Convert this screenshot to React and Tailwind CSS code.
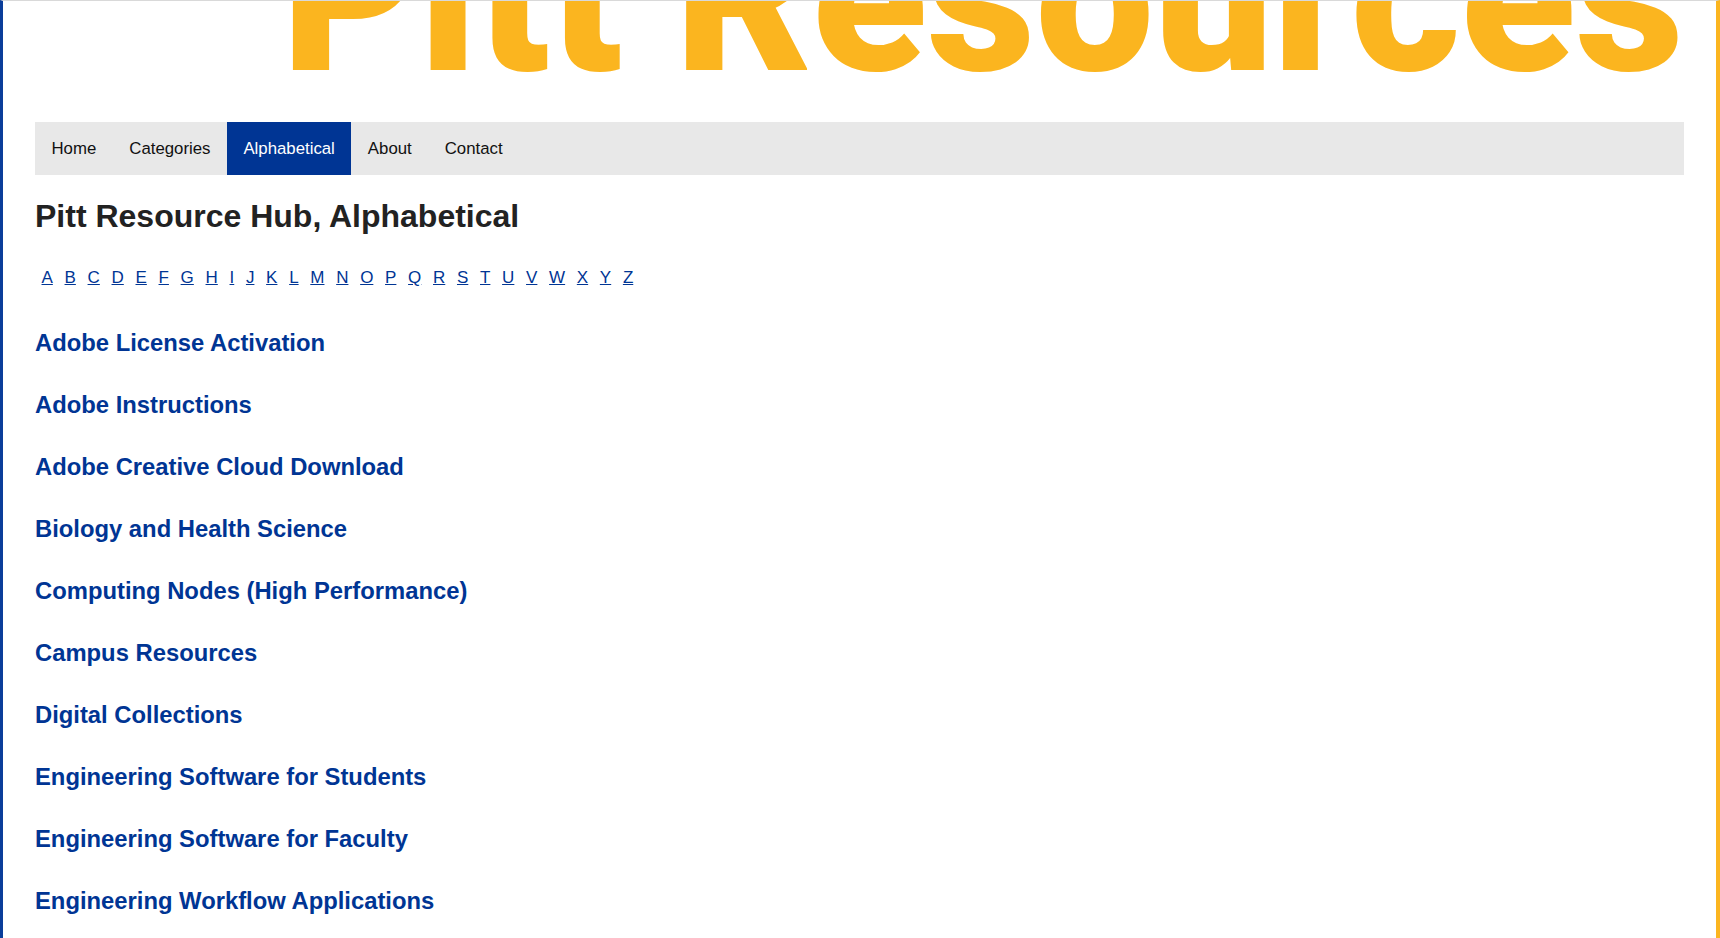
import React from 'react';

const navItems = ['Home', 'Categories', 'Alphabetical', 'About', 'Contact'];

const letters = 'ABCDEFGHIJKLMNOPQRSTUVWXYZ'.split('');

const resources = [
  'Adobe License Activation',
  'Adobe Instructions',
  'Adobe Creative Cloud Download',
  'Biology and Health Science',
  'Computing Nodes (High Performance)',
  'Campus Resources',
  'Digital Collections',
  'Engineering Software for Students',
  'Engineering Software for Faculty',
  'Engineering Workflow Applications',
];

const App = () => {
  const active = 'Alphabetical';

  return (
    <div className="min-h-screen bg-white border-t border-t-[#d9d9d9] border-l-[3px] border-l-[#0a3d9a] border-r-[4px] border-r-[#fbb51f] font-['Liberation_Sans',Arial,sans-serif]">
      <div className="px-8">
        {/* Banner */}
        <div className="h-[121px] overflow-hidden">
          <h1 className="mt-[-108px] text-right text-[211px] leading-none font-black text-[#fbb51f] font-['Roboto','Inter',sans-serif] whitespace-nowrap">
            Pitt Resources
          </h1>
        </div>

        {/* Navigation */}
        <nav className="flex h-[53px] bg-[#e8e8e8]">
          {navItems.map((item) => (
            <a
              key={item}
              href="#"
              className={`px-[16.5px] text-[16.8px] leading-[53px] ${
                item === active ? 'bg-[#003594] text-white' : 'text-[#111]'
              }`}
            >
              {item}
            </a>
          ))}
        </nav>

        {/* Page title */}
        <h2 className="mt-[23px] text-[32px] leading-[37px] font-bold text-[#222]">
          Pitt Resource Hub, Alphabetical
        </h2>

        {/* Letter index */}
        <div className="mt-[33px] flex gap-[11.7px] pl-[6.5px] text-[17px] leading-[20px]">
          {letters.map((l) => (
            <a key={l} href="#" className="text-[#003594] underline">
              {l}
            </a>
          ))}
        </div>

        {/* Resource list */}
        <ul className="mt-[24px]">
          {resources.map((r) => (
            <li key={r} className="text-[23.8px] leading-[62px] font-bold">
              <a href="#" className="text-[#003594]">
                {r}
              </a>
            </li>
          ))}
        </ul>
      </div>
    </div>
  );
};

export default App;
